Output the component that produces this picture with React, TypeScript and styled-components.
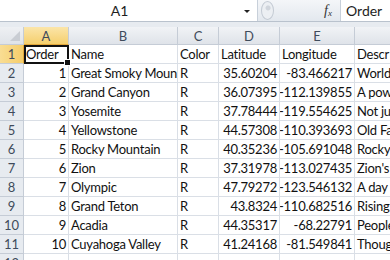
import React from 'react';
import styled, { createGlobalStyle, css } from 'styled-components';

const GlobalStyle = createGlobalStyle`
  html, body {
    margin: 0;
    padding: 0;
    background: #ffffff;
    overflow: hidden;
  }
  body {
    font-family: Lato, "Open Sans", sans-serif;
  }
`;

type Row = {
  order: number;
  name: string;
  color: string;
  lat: string;
  lng: string;
  desc: string;
};

const ROWS: Row[] = [
  { order: 1, name: 'Great Smoky Mountains', color: 'R', lat: '35.60204', lng: '-83.466217', desc: 'World' },
  { order: 2, name: 'Grand Canyon', color: 'R', lat: '36.07395', lng: '-112.139855', desc: 'A powerful' },
  { order: 3, name: 'Yosemite', color: 'R', lat: '37.78444', lng: '-119.554625', desc: 'Not just' },
  { order: 4, name: 'Yellowstone', color: 'R', lat: '44.57308', lng: '-110.393693', desc: 'Old Faithful' },
  { order: 5, name: 'Rocky Mountain', color: 'R', lat: '40.35236', lng: '-105.691048', desc: 'Rocky' },
  { order: 6, name: 'Zion', color: 'R', lat: '37.31978', lng: '-113.027435', desc: "Zion's" },
  { order: 7, name: 'Olympic', color: 'R', lat: '47.79272', lng: '-123.546132', desc: 'A day' },
  { order: 8, name: 'Grand Teton', color: 'R', lat: '43.8324', lng: '-110.682516', desc: 'Rising' },
  { order: 9, name: 'Acadia', color: 'R', lat: '44.35317', lng: '-68.22791', desc: 'People' },
  { order: 10, name: 'Cuyahoga Valley', color: 'R', lat: '41.24168', lng: '-81.549841', desc: 'Though' },
];

const COLUMNS = ['A', 'B', 'C', 'D', 'E', ''];

const App = () => {
  return (
    <>
      <GlobalStyle />
      <Window>
        <FormulaBar>
          <NameBox>
            <NameText>A1</NameText>
            <DropArrow />
          </NameBox>
          <Splitter>
            <Grip />
          </Splitter>
          <FxButton>
            <Fx>
              f<sub>x</sub>
            </Fx>
          </FxButton>
          <FormulaInput>Order</FormulaInput>
        </FormulaBar>
        <Gap />
        <Sheet>
          <Corner>
            <CornerTriangle />
          </Corner>
          {COLUMNS.map((c, i) => (
            <ColHeader key={`h${i}`} $active={c === 'A'}>
              {c}
            </ColHeader>
          ))}

          <RowHeader $active>1</RowHeader>
          <Cell $selected>Order</Cell>
          <Cell>Name</Cell>
          <Cell>Color</Cell>
          <Cell>Latitude</Cell>
          <Cell>Longitude</Cell>
          <Cell>Descr</Cell>

          {ROWS.map((r, i) => (
            <React.Fragment key={r.order}>
              <RowHeader>{i + 2}</RowHeader>
              <Cell $num>{r.order}</Cell>
              <Cell>{r.name}</Cell>
              <Cell>{r.color}</Cell>
              <Cell $num>{r.lat}</Cell>
              <Cell $num>{r.lng}</Cell>
              <Cell>{r.desc}</Cell>
            </React.Fragment>
          ))}

          <RowHeader>12</RowHeader>
          {COLUMNS.map((_, i) => (
            <Cell key={`e${i}`} />
          ))}
        </Sheet>
      </Window>
    </>
  );
};

export default App;

const Window = styled.div`
  width: 390px;
  height: 260px;
  overflow: hidden;
  background: #eef1f5;
`;

const FormulaBar = styled.div`
  height: 21px;
  display: flex;
  align-items: stretch;
  border-bottom: 1px solid #b9c2cd;
  background: #ffffff;
`;

const NameBox = styled.div`
  width: 257px;
  position: relative;
  display: flex;
  align-items: center;
  justify-content: center;
  border-right: 1px solid #c8d0da;
  font-size: 14px;
  color: #1e1e1e;
`;

const NameText = styled.span`
  margin-right: 18px;
`;

const DropArrow = styled.span`
  position: absolute;
  right: 7px;
  top: 10px;
  width: 0;
  height: 0;
  border-left: 3px solid transparent;
  border-right: 3px solid transparent;
  border-top: 3px solid #222222;
`;

const Splitter = styled.div`
  width: 16px;
  background: linear-gradient(#f4f6f9, #e3e8ee);
  display: flex;
  align-items: center;
  justify-content: flex-start;
  padding-left: 3px;
`;

const Grip = styled.div`
  width: 11px;
  height: 17px;
  border-radius: 50%;
  border: 1px solid #c3cad3;
  background: radial-gradient(circle at 55% 35%, #d0d5dc 0 2px, #eceff3 3px);
`;

const FxButton = styled.div`
  width: 64px;
  background: linear-gradient(#f4f6f9, #e3e8ee);
  border-right: 1px solid #c8d0da;
  display: flex;
  align-items: center;
  justify-content: flex-end;
  padding-right: 8px;
  box-sizing: border-box;
`;

const Fx = styled.span`
  font-family: "Liberation Serif", serif;
  font-style: italic;
  font-size: 14px;
  color: #333333;
  sub {
    font-size: 9px;
    vertical-align: -1px;
  }
`;

const FormulaInput = styled.div`
  flex: 1;
  display: flex;
  align-items: center;
  padding-left: 5px;
  font-size: 14px;
  color: #1e1e1e;
`;

const Gap = styled.div`
  height: 5px;
  background: #e7ebf0;
`;

const Sheet = styled.div`
  display: grid;
  grid-template-columns: 24px 45px 109px 41px 61px 75px 40px;
  grid-template-rows: 18px repeat(12, 19px);
  background: #ffffff;
`;

const headerBase = css`
  box-sizing: border-box;
  display: flex;
  align-items: center;
  justify-content: center;
  font-size: 13px;
  color: #3f4b5b;
  border-right: 1px solid #c5ccd6;
  border-bottom: 1px solid #c5ccd6;
`;

const Corner = styled.div`
  ${headerBase};
  position: relative;
  background: linear-gradient(#eef0f3, #dfe3e8);
`;

const CornerTriangle = styled.span`
  position: absolute;
  right: 3px;
  bottom: 3px;
  width: 0;
  height: 0;
  border-left: 10px solid transparent;
  border-bottom: 10px solid #c9cdd3;
`;

const ColHeader = styled.div<{ $active?: boolean }>`
  ${headerBase};
  background: ${({ $active }) =>
    $active ? 'linear-gradient(#fbe5a9, #f5cf6d)' : 'linear-gradient(#f1f3f6, #dfe3e9)'};
  border-bottom-color: ${({ $active }) => ($active ? '#e2a73a' : '#c5ccd6')};
`;

const RowHeader = styled.div<{ $active?: boolean }>`
  ${headerBase};
  background: ${({ $active }) => ($active ? 'linear-gradient(90deg, #f9dd93, #f5cd6a)' : '#e7ebf0')};
  border-right-color: ${({ $active }) => ($active ? '#e2a73a' : '#c5ccd6')};
`;

const Cell = styled.div<{ $num?: boolean; $selected?: boolean }>`
  box-sizing: border-box;
  position: relative;
  display: flex;
  align-items: center;
  justify-content: ${({ $num }) => ($num ? 'flex-end' : 'flex-start')};
  padding: 0 2px 0 2px;
  font-size: 13px;
  letter-spacing: -0.25px;
  color: #111111;
  white-space: nowrap;
  overflow: hidden;
  border-right: 1px solid #dadfe6;
  border-bottom: 1px solid #dadfe6;

  ${({ $selected }) =>
    $selected &&
    css`
      overflow: visible;
      outline: 2px solid #111111;
      outline-offset: -2px;
      z-index: 1;
      &::after {
        content: '';
        position: absolute;
        right: -3px;
        bottom: -3px;
        width: 5px;
        height: 5px;
        background: #111111;
        border: 1px solid #ffffff;
      }
    `}
`;
